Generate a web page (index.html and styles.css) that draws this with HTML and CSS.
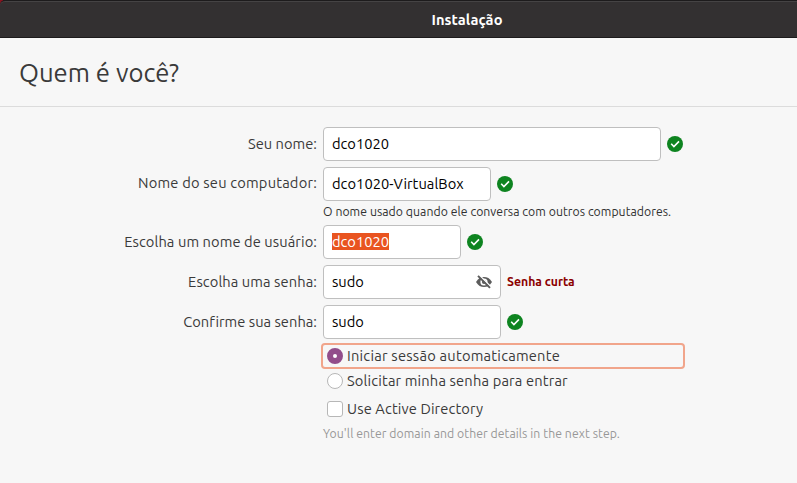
FILE: index.html
```html
<!DOCTYPE html>
<html lang="pt-BR">
<head>
<meta charset="utf-8">
<title>Instalação</title>
<link rel="stylesheet" href="styles.css">
</head>
<body>
<svg class="defs" width="0" height="0" aria-hidden="true">
  <symbol id="ok" viewBox="0 0 16 16"><circle cx="8" cy="8" r="8" fill="#0e8420"/><path d="M4.200 7.800 6.900 10.500 12 5.400" fill="none" stroke="#fff" stroke-width="1.600"/></symbol>
</svg>
<div class="frame"><header class="titlebar"><span>Instalação</span></header></div>
<div class="heading"><h1>Quem é você?</h1></div>
<main class="form">
  <div class="row"><label>Seu nome:</label><div class="field wide">dco1020</div><svg class="ok"><use href="#ok"/></svg></div>
  <div class="row"><label class="raised loose">Nome do seu computador:</label><div class="field computer">dco1020-VirtualBox</div><svg class="ok"><use href="#ok"/></svg></div>
  <p class="note">O nome usado quando ele conversa com outros computadores.</p>
  <div class="row"><label class="normal">Escolha um nome de usuário:</label><div class="field user"><span class="selected">dco1020</span></div><svg class="ok"><use href="#ok"/></svg></div>
  <div class="row"><label class="normal">Escolha uma senha:</label><div class="field pass">sudo
    <svg class="eye" viewBox="0 0 16 16"><path d="M0 8C2 4.300 5 3 8 3s6 1.300 8 5c-2 3.700-5 5-8 5S2 11.700 0 8Z" fill="#5c5c5c"/><circle cx="8" cy="8" r="3.600" fill="#fff"/><circle cx="8" cy="8" r="2.100" fill="#5c5c5c"/><path d="M3.300 1.200 14.600 12.500" stroke="#fff" stroke-width="1.500"/><path d="M2 1.800 14 13.800" stroke="#5c5c5c" stroke-width="1.900"/></svg></div><strong class="warn">Senha curta</strong></div>
  <div class="row"><label>Confirme sua senha:</label><div class="field pass">sudo</div><svg class="ok"><use href="#ok"/></svg></div>
  <div class="options">
    <div class="option focused"><i class="radio on"></i><span>Iniciar sessão automaticamente</span></div>
    <div class="option second"><i class="radio"></i><span>Solicitar minha senha para entrar</span></div>
    <div class="option directory"><i class="check"></i><span>Use Active Directory</span></div>
    <p class="hint">You'll enter domain and other details in the next step.</p>
  </div>
</main>
</body>
</html>
```

FILE: styles.css
```css
* { box-sizing: border-box; }
body {
  margin: 0;
  width: 797px;
  height: 483px;
  overflow: hidden;
  background: #f7f7f7;
  color: #3a3a3a;
  font: 14.667px/20px "Ubuntu", "Noto Sans", sans-serif;
  white-space: nowrap;
}
h1, p { margin: 0; font-weight: 400; }
.defs { position: absolute; }
.frame { height: 38px; background: linear-gradient(90deg, #8a1420 3px, #1d1b1c 3px); }
.titlebar {
  height: 38px;
  display: flex;
  align-items: center;
  justify-content: center;
  padding-left: 137px;
  padding-top: 1px;
  background: #333031;
  border-top: 1px solid #1d1b1c;
  border-bottom: 1px solid #1d1b1c;
  border-top-left-radius: 5px;
  box-shadow: inset 0 1px #454344;
  color: #fff;
  font-weight: 700;
  letter-spacing: 0.1px;
}
.heading { height: 69px; padding: 17px 0 0 19px; border-bottom: 1px solid #dcdcdc; }
.heading h1 { font-size: 25.7px; line-height: 36px; }
.form { padding-top: 20px; }
.row { display: flex; align-items: center; height: 34px; margin-bottom: 6px; }
.row label { width: 317px; margin-right: 6px; text-align: right; letter-spacing: 0.03px; }
.row .normal { letter-spacing: 0.09px; }
.row .loose { letter-spacing: 0.2px; }
.row .raised { padding-bottom: 2px; }
.field {
  height: 34px;
  display: flex;
  align-items: center;
  padding: 0 8px;
  background: #fff;
  border: 1px solid #bfbfbf;
  border-radius: 4px;
  color: #000;
}
.wide { width: 338px; }
.computer { width: 168px; letter-spacing: 0.05px; }
.user { width: 138px; }
.pass { width: 178px; }
.selected { margin-bottom: 1px; background: #e95420; color: #fff; line-height: 17px; }
.ok { width: 16px; height: 16px; margin-left: 6px; }
.eye { width: 16px; height: 16px; margin-left: auto; }
.warn { margin-left: 6px; color: #8b0000; font-size: 12.220px; }
.note { height: 18px; line-height: 18px; margin: -4px 0 4px 323px; color: #303030; font-size: 12.220px; letter-spacing: 0.055px; }
.options { margin: -2px 0 0 321px; }
.option { display: flex; align-items: center; height: 26px; padding-left: 6px; letter-spacing: 0.16px; }
.focused { width: 364px; padding-left: 4px; border: 2px solid #f1a58b; border-radius: 4px; letter-spacing: 0.23px; }
.second { margin-top: -1px; }
.directory { margin-top: 2px; letter-spacing: 0.13px; }
.radio, .check { flex: none; width: 16px; height: 16px; margin-right: 4px; background: #fff; border: 1px solid #b7b7b7; border-radius: 50%; }
.radio.on { border: 6px solid #924d8b; }
.check { border-radius: 3px; }
.hint { margin: 2px 0 0 2px; color: #979797; font-size: 12.220px; letter-spacing: 0.065px; }
```
